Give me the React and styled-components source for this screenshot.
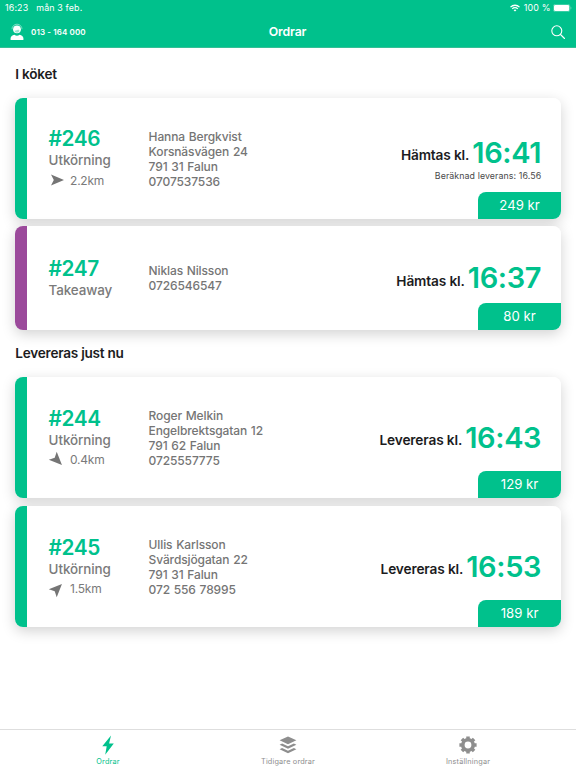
import React from "react";
import styled, { createGlobalStyle } from "styled-components";

const GREEN = "#00c18c";
const PURPLE = "#9b4a9b";

const GlobalStyle = createGlobalStyle`
  * { box-sizing: border-box; }
  body {
    margin: 0;
    background: #fff;
    font-family: Inter, "Liberation Sans", sans-serif;
    color: #1c1c1e;
    overflow: hidden;
  }
`;

const Screen = styled.div`
  width: 576px;
  height: 768px;
  display: flex;
  flex-direction: column;
  background: #fff;
  overflow: hidden;
`;

const Header = styled.header`
  height: 48.3px;
  flex: none;
  background: ${GREEN};
  color: #fff;
  border-bottom: 1px solid #35bf96;
`;

const StatusBar = styled.div`
  height: 16px;
  display: flex;
  align-items: center;
  padding: 0 4px 0 5px;
  font-size: 8.9px;
  line-height: 16px;
  letter-spacing: 0.14px;
`;

const StatusDate = styled.span`
  margin-left: 8px;
  flex: 1;
`;

const Wifi = styled.svg`
  width: 10px;
  height: 8px;
  margin-right: 4px;
`;

const Battery = styled.svg`
  width: 19px;
  height: 8px;
  margin-left: 2.5px;
`;

const NavBar = styled.div`
  height: 31px;
  display: grid;
  grid-template-columns: 1fr auto 1fr;
  align-items: center;
  padding: 0 11px 0 10px;
`;

const Support = styled.div`
  display: flex;
  align-items: center;
  gap: 7px;
  font-size: 8px;
  font-weight: 600;
  letter-spacing: 0.12px;
`;

const SupportIcon = styled.svg`
  width: 14px;
  height: 17px;
`;

const NavTitle = styled.h1`
  margin: 0;
  font-size: 12.3px;
  font-weight: 600;
  letter-spacing: -0.12px;
`;

const SearchIcon = styled.svg`
  width: 14px;
  height: 14px;
  justify-self: end;
`;

const Content = styled.main`
  flex: 1;
  padding: 0 15.3px;
`;

const SectionTitle = styled.h2`
  margin: 0;
  height: ${(p) => p.$height}px;
  line-height: ${(p) => p.$height + (p.$shift || 0)}px;
  font-size: 13.6px;
  font-weight: 600;
  letter-spacing: -0.25px;
`;

const CardList = styled.div`
  display: flex;
  flex-direction: column;
  gap: 7.4px;
`;

const Card = styled.article`
  position: relative;
  height: ${(p) => (p.$compact ? 103.6 : 121.4)}px;
  display: grid;
  grid-template-columns: 100px 1fr auto;
  align-items: center;
  padding: 0 19.5px 0 33.3px;
  border-radius: 8px;
  background: linear-gradient(to right, ${(p) => p.$accent} 11.6px, #fff 11.7px);
  box-shadow: 0 4px 14px rgba(0, 0, 0, 0.18);
`;

const Summary = styled.div`
  padding-top: ${(p) => (p.$compact ? 0 : 2)}px;
`;

const OrderNumber = styled.div`
  font-size: 20.8px;
  line-height: 24px;
  font-weight: 600;
  letter-spacing: -0.4px;
  color: ${GREEN};
`;

const OrderType = styled.div`
  font-size: 13.4px;
  line-height: 18px;
  font-weight: 500;
  letter-spacing: -0.1px;
  color: #7a7a7a;
`;

const Distance = styled.div`
  display: flex;
  align-items: center;
  gap: 5.5px;
  height: 22px;
  font-size: 12px;
  letter-spacing: -0.25px;
  color: #7a7a7a;
`;

const ArrowIcon = styled.svg`
  width: 16px;
  height: 16px;
  overflow: visible;
`;

const Customer = styled.address`
  padding-top: ${(p) => (p.$compact ? 0 : 1)}px;
  font-style: normal;
  font-size: 12px;
  line-height: 15px;
  font-weight: 500;
  letter-spacing: -0.12px;
  word-spacing: 0.7px;
  color: #757575;
`;

const Schedule = styled.div`
  padding-top: ${(p) => (p.$detailed ? 3 : 0)}px;
  text-align: right;
`;

const TimeRow = styled.div`
  display: flex;
  align-items: center;
  justify-content: flex-end;
  gap: 3px;
  height: 32px;
`;

const TimeLabel = styled.span`
  padding-top: 5px;
  font-size: 13.7px;
  line-height: 24px;
  font-weight: 600;
  letter-spacing: -0.15px;
`;

const Time = styled.span`
  font-size: 29px;
  line-height: 32px;
  font-weight: 600;
  letter-spacing: -0.35px;
  color: ${GREEN};
`;

const Estimate = styled.div`
  font-size: 8.8px;
  line-height: 14px;
  letter-spacing: 0.1px;
  color: #4a4a4a;
`;

const Price = styled.div`
  position: absolute;
  right: 0;
  bottom: 0;
  width: 82.3px;
  height: 27px;
  border-radius: 8px 0 8px 0;
  background: ${GREEN};
  color: #fff;
  font-size: 13.2px;
  line-height: 27px;
  text-align: center;
`;

const TabBar = styled.nav`
  height: 39px;
  flex: none;
  display: flex;
  justify-content: center;
  border-top: 1px solid #dedede;
  background: #fff;
`;

const Tab = styled.div`
  width: 180px;
  display: flex;
  flex-direction: column;
  align-items: center;
  padding-top: 5px;
  font-size: 7.3px;
  line-height: 11px;
  letter-spacing: 0.18px;
  color: ${(p) => (p.$active ? GREEN : "#8e8e8e")};
`;

const TabIcon = styled.svg`
  width: 20px;
  height: 20px;
  margin-bottom: 0.5px;
  fill: currentColor;
`;

const sections = [
  {
    title: "I köket",
    height: 49.4,
    shift: 3,
    orders: [
      {
        id: "#246", type: "Utkörning", distance: "2.2km", angle: 0,
        customer: ["Hanna Bergkvist", "Korsnäsvägen 24", "791 31 Falun", "0707537536"],
        label: "Hämtas kl.", time: "16:41", estimate: "Beräknad leverans: 16.56", price: "249 kr",
      },
      {
        id: "#247", type: "Takeaway",
        customer: ["Niklas Nilsson", "0726546547"],
        label: "Hämtas kl.", time: "16:37", price: "80 kr",
      },
    ],
  },
  {
    title: "Levereras just nu",
    height: 47,
    orders: [
      {
        id: "#244", type: "Utkörning", distance: "0.4km", angle: 45,
        customer: ["Roger Melkin", "Engelbrektsgatan 12", "791 62 Falun", "0725557775"],
        label: "Levereras kl.", time: "16:43", price: "129 kr",
      },
      {
        id: "#245", type: "Utkörning", distance: "1.5km", angle: -45,
        customer: ["Ullis Karlsson", "Svärdsjögatan 22", "791 31 Falun", "072 556 78995"],
        label: "Levereras kl.", time: "16:53", price: "189 kr",
      },
    ],
  },
];

function OrderCard({ order }) {
  const pickup = !order.distance;
  return (
    <Card $compact={pickup} $accent={pickup ? PURPLE : GREEN}>
      <Summary $compact={pickup}>
        <OrderNumber>{order.id}</OrderNumber>
        <OrderType>{order.type}</OrderType>
        {order.distance && (
          <Distance>
            <ArrowIcon viewBox="-8 -8 16 16">
              <path d="M7 0 -6 5.6 -3.2 0 -6 -5.6Z" fill="#757575" transform={`rotate(${order.angle})`} />
            </ArrowIcon>
            {order.distance}
          </Distance>
        )}
      </Summary>
      <Customer $compact={pickup}>
        {order.customer.map((line) => (
          <div key={line}>{line}</div>
        ))}
      </Customer>
      <Schedule $detailed={Boolean(order.estimate)}>
        <TimeRow>
          <TimeLabel>{order.label}</TimeLabel>
          <Time>{order.time}</Time>
        </TimeRow>
        {order.estimate && <Estimate>{order.estimate}</Estimate>}
      </Schedule>
      <Price>{order.price}</Price>
    </Card>
  );
}

export default function App() {
  return (
    <Screen>
      <GlobalStyle />
      <Header>
        <StatusBar>
          <span>16:23</span>
          <StatusDate>mån 3 feb.</StatusDate>
          <Wifi viewBox="0 0 10 8" fill="none" stroke="#fff" strokeWidth="1.3">
            <path d="M0.5 3.1a6.4 6.4 0 0 1 9 0" />
            <path d="M2.2 4.9a4 4 0 0 1 5.6 0" />
            <path d="M5 7.6 3.6 6.2a2 2 0 0 1 2.8 0Z" fill="#fff" stroke="none" />
          </Wifi>
          <span>100 %</span>
          <Battery viewBox="0 0 19 8">
            <rect x="0.3" y="0.3" width="16.6" height="7.4" rx="2" fill="none" stroke="#fff" strokeOpacity="0.45" strokeWidth="0.6" />
            <rect x="1" y="1" width="15.2" height="6" rx="1.3" fill="#fff" />
            <path d="M17.7 2.8a1.4 1.4 0 0 1 0 2.4Z" fill="#fff" fillOpacity="0.5" />
          </Battery>
        </StatusBar>
        <NavBar>
          <Support>
            <SupportIcon viewBox="0 0 14 17">
              <path d="M2 6.2a5 5 0 0 1 10 0" fill="none" stroke="#fff" strokeOpacity="0.6" strokeWidth="0.8" />
              <circle cx="7" cy="6.3" r="3.9" fill="#fff" />
              <path d="M4.4 7.8Q7 7.6 8.3 6.6 9 7.4 9.6 7.8 9 9.6 7 9.7 5 9.6 4.4 7.8Z" fill={GREEN} fillOpacity="0.4" />
              <path d="M0.6 17v-1.9Q1 12.6 4.4 11.8q2.6 1.7 5.2 0 3.4.8 3.8 3.3V17Z" fill="#fff" />
            </SupportIcon>
            013 - 164 000
          </Support>
          <NavTitle>Ordrar</NavTitle>
          <SearchIcon viewBox="0 0 14 14" fill="none" stroke="#fff" strokeWidth="1.1" strokeLinecap="round">
            <circle cx="5.8" cy="5.8" r="5" />
            <path d="m9.5 9.5 4 4" />
          </SearchIcon>
        </NavBar>
      </Header>
      <Content>
        {sections.map((section) => (
          <section key={section.title}>
            <SectionTitle $height={section.height} $shift={section.shift}>{section.title}</SectionTitle>
            <CardList>
              {section.orders.map((order) => (
                <OrderCard key={order.id} order={order} />
              ))}
            </CardList>
          </section>
        ))}
      </Content>
      <TabBar>
        <Tab $active>
          <TabIcon viewBox="0 0 20 20">
            <path d="M13 .6 4.3 11.3h4.4L7.2 19.8 15.8 8.4h-4.7Z" />
          </TabIcon>
          Ordrar
        </Tab>
        <Tab>
          <TabIcon viewBox="0 0 20 20">
            <path d="m10 1.4 8.4 3.9L10 9.2 1.6 5.3Z" />
            <path d="m1.6 9.8 2.5-1.2L10 11.2l5.9-2.6 2.5 1.2-8.4 3.9Z" />
            <path d="m1.6 14.3 2.5-1.2 5.9 2.6 5.9-2.6 2.5 1.2-8.4 3.9Z" />
          </TabIcon>
          Tidigare ordrar
        </Tab>
        <Tab>
          <TabIcon viewBox="0 0 20 20">
            <circle cx="10" cy="10" r="5.2" fill="none" stroke="currentColor" strokeWidth="3.6" />
            <g fill="none" stroke="currentColor" strokeWidth="3.5">
              <path d="M10 1.4V4M10 16v2.6M1.4 10H4M16 10h2.6M3.9 3.9l1.9 1.9M14.2 14.2l1.9 1.9M3.9 16.1l1.9-1.9M14.2 5.8l1.9-1.9" />
            </g>
          </TabIcon>
          Inställningar
        </Tab>
      </TabBar>
    </Screen>
  );
}
